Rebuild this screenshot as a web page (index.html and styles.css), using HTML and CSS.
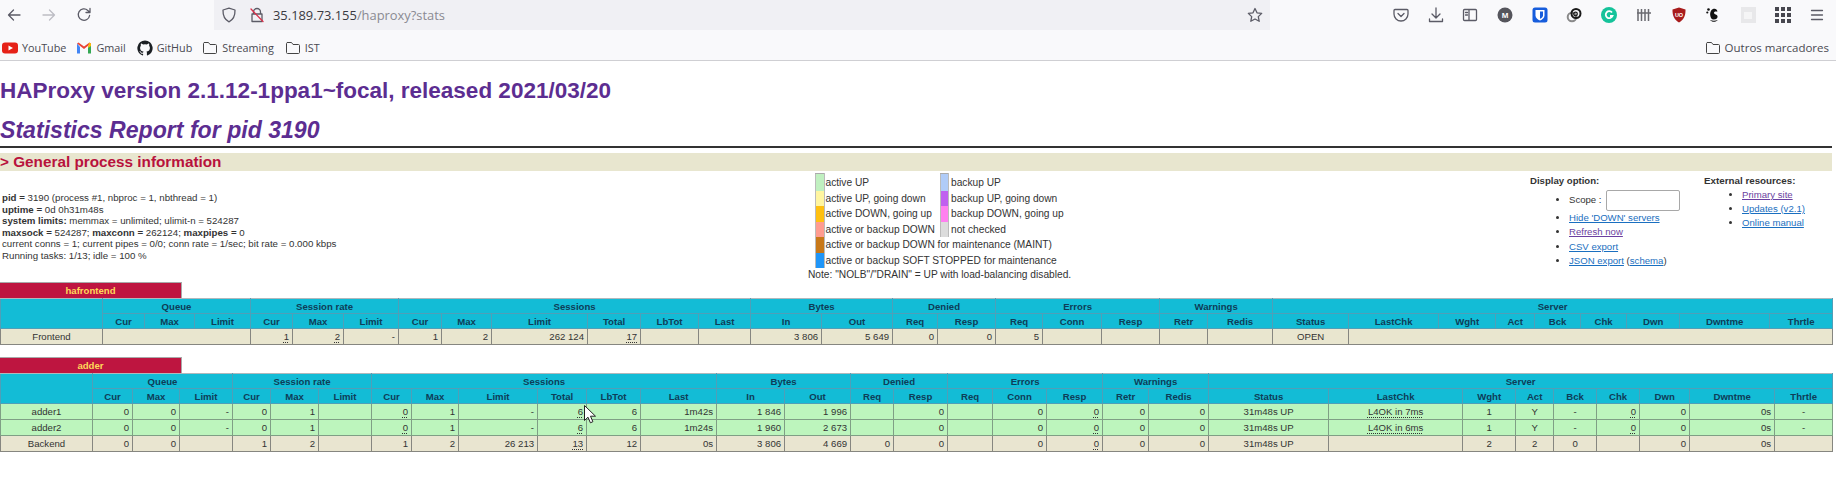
FILE: index.html
```html
<!DOCTYPE html>
<html lang="en">
<head>
<meta charset="utf-8">
<title>Statistics Report for HAProxy</title>
<link rel="stylesheet" href="styles.css">
</head>
<body>
<header class="chrome">
  <div class="nav">
    <div class="nav-left">
      <svg class="ico" viewBox="0 0 16 16"><path class="st" d="M14 8H2.5M7.5 3 2.5 8l5 5"/></svg>
      <svg class="ico" viewBox="0 0 16 16"><path class="st faint" d="M2 8h11.5M8.5 3l5 5-5 5"/></svg>
      <svg class="ico" viewBox="0 0 16 16"><path class="st" d="M13.6 8.5A5.7 5.7 0 1 1 11.8 3.4L14 5.4M14 1.5v4h-4"/></svg>
    </div>
    <div class="url">
      <svg class="ico" viewBox="0 0 16 16"><path class="st" d="M8 1.2 14 3c.2 6-1.6 9.6-6 11.8C3.600 12.600 1.800 9 2 3z"/></svg>
      <svg class="ico lock" viewBox="0 0 16 16"><path class="st" d="M4.500 7V5a3.500 3.500 0 0 1 7 0v2M3 7h10v7.500H3z"/><path class="st red" d="M2 2l12 12.500"/></svg>
      <span class="addr">35.189.73.155<span class="addr-dim">/haproxy?stats</span></span>
      <svg class="ico star" viewBox="0 0 16 16"><path class="st" d="m8 1.500 2 4.300 4.700.6-3.400 3.200.9 4.700L8 12l-4.200 2.300.9-4.700L1.300 6.400 6 5.800z"/></svg>
    </div>
    <div class="nav-right">
      <svg class="ico" viewBox="0 0 16 16"><path class="st" d="M2 2.500h12c.6 0 1 .4 1 1V7a7 7 0 0 1-14 0V3.500c0-.6.4-1 1-1z"/><path class="st" d="m5 6.500 3 3 3-3"/></svg>
      <svg class="ico" viewBox="0 0 16 16"><path class="st" d="M8 1v9.500M4 7l4 4 4-4M1.500 12v2.500h13V12"/></svg>
      <svg class="ico" viewBox="0 0 16 16"><path class="st" d="M2.500 2.500h11c.6 0 1 .4 1 1v9c0 .6-.4 1-1 1h-11c-.6 0-1-.4-1-1v-9c0-.6.4-1 1-1zM7 2.500v11M3.500 5.500h2M3.500 8h2"/></svg>
      <svg class="ico" viewBox="0 0 16 16"><circle cx="8" cy="8" r="7.500" fill="#55555c"/><text x="8" y="11" class="ic-t">M</text></svg>
      <svg class="ico" viewBox="0 0 16 16"><rect x="0.500" y="0.500" width="15" height="15" rx="2.500" fill="#175ddc"/><path d="M3.500 3h9v5.500c0 2.500-2.200 4-4.500 5-2.300-1-4.500-2.500-4.500-5z" fill="#fff"/><path d="M8 4.500h3v4c0 1.500-1.500 2.600-3 3.300z" fill="#175ddc"/></svg>
      <svg class="ico" viewBox="0 0 16 16"><circle cx="6" cy="10" r="4.300" fill="none" stroke="#8a8a8a" stroke-width="2"/><circle cx="10" cy="6.500" r="4.500" fill="none" stroke="#1a1a1a" stroke-width="2"/><circle cx="9.500" cy="7" r="1.800" fill="none" stroke="#1a1a1a" stroke-width="1.300"/></svg>
      <svg class="ico" viewBox="0 0 16 16"><circle cx="8" cy="8" r="8" fill="#15c39a"/><path d="M11 5.500A3.500 3.500 0 1 0 11.500 9H9" fill="none" stroke="#fff" stroke-width="1.800"/></svg>
      <svg class="ico" viewBox="0 0 16 16"><path class="st bars" d="M2 2v12M5.500 2v12M9 2v12M12.500 2v12M1 6h14"/></svg>
      <svg class="ico" viewBox="0 0 16 16"><path d="M8 .5 14.500 2.500C14.700 9 12.500 13 8 15.500 3.500 13 1.300 9 1.500 2.500z" fill="#a81c1c"/><text x="8" y="10" class="ic-t ic-sm">UO</text></svg>
      <svg class="ico" viewBox="0 0 16 16"><path d="M8.500 12.500c3 0 4.500-1.700 4-3.500-.5-1.700-3.200-1.300-3.500-3-.3-1.400 1.700-2 3.200-1.200.8-1.500-1.700-3.500-3.700-3C5.800 2.500 4.800 6 5.300 8.700c.4 2.300 1.400 3.800 3.200 3.800z" fill="#111"/><circle cx="3.500" cy="2.500" r="1.300" fill="#111"/><circle cx="2.300" cy="5.500" r="1.100" fill="#111"/><path d="M5 13c1.800 2.400 6 2.400 7.800 0-2.400.9-5.400.9-7.800 0z" fill="#111"/></svg>
      <svg class="ico" viewBox="0 0 16 16"><rect x="1" y="0" width="15" height="16" fill="#e8e8ea"/><rect x="4" y="5" width="8" height="7" fill="#f5f5f6"/></svg>
      <svg class="ico" viewBox="0 0 16 16"><path d="M0 0h4v4H0zM6 0h4v4H6zM12 0h4v4h-4zM0 6h4v4H0zM6 6h4v4H6zM12 6h4v4h-4zM0 12h4v4H0zM6 12h4v4H6zM12 12h4v4h-4z" fill="#47474f"/></svg>
      <svg class="ico" viewBox="0 0 16 16"><path class="st" d="M2.500 3.500h11M2.500 8h11M2.500 12.500h11"/></svg>
    </div>
  </div>
  <div class="bookmarks">
    <span class="bm bm-yt"><svg class="bi" viewBox="0 0 16 16"><rect y="2.500" width="16" height="11" rx="3" fill="#e62117"/><path d="m6.500 5.500 4.500 2.500-4.500 2.500z" fill="#fff"/></svg>YouTube</span>
    <span class="bm bm-gm"><svg class="bi" viewBox="0 0 16 16"><path d="M1 3.500v10h3V7z" fill="#4285f4"/><path d="M15 3.500v10h-3V7z" fill="#34a853"/><path d="M1 3.500 8 9l7-5.500-1.500-1L8 6.500 2.500 2.500z" fill="#ea4335"/><path d="M13 2.800 15 3.500V6l-3 2z" fill="#fbbc04"/></svg>Gmail</span>
    <span class="bm bm-gh"><svg class="bi" viewBox="0 0 16 16"><path d="M8 .5a7.700 7.700 0 0 0-2.400 15c.4 0 .5-.2.5-.4v-1.400c-2.100.5-2.600-1-2.600-1-.3-.9-.8-1.100-.8-1.100-.7-.5 0-.5 0-.5.800 0 1.200.8 1.200.8.700 1.200 1.800.9 2.200.7 0-.5.300-.9.500-1.100-1.700-.2-3.500-.8-3.500-3.800 0-.8.300-1.500.8-2-.1-.2-.3-1 .1-2.100 0 0 .6-.2 2.100.8a7.400 7.400 0 0 1 3.800 0c1.500-1 2.100-.8 2.100-.8.400 1.100.2 1.900.1 2.100.5.500.8 1.200.8 2 0 3-1.800 3.600-3.500 3.800.3.200.5.700.5 1.500v2.100c0 .2.100.4.500.4A7.700 7.700 0 0 0 8 .5z" fill="#1b1f23"/></svg>GitHub</span>
    <span class="bm bm-st"><svg class="bi" viewBox="0 0 16 16"><path class="st thin" d="M2.500 2.500h4l1.500 2h5.500c.6 0 1 .4 1 1v7c0 .6-.4 1-1 1h-11c-.6 0-1-.4-1-1v-9c0-.6.4-1 1-1z"/></svg>Streaming</span>
    <span class="bm bm-is"><svg class="bi" viewBox="0 0 16 16"><path class="st thin" d="M2.500 2.500h4l1.500 2h5.500c.6 0 1 .4 1 1v7c0 .6-.4 1-1 1h-11c-.6 0-1-.4-1-1v-9c0-.6.4-1 1-1z"/></svg>IST</span>
    <span class="bm bm-ot"><svg class="bi" viewBox="0 0 16 16"><path class="st thin" d="M2.500 2.500h4l1.500 2h5.500c.6 0 1 .4 1 1v7c0 .6-.4 1-1 1h-11c-.6 0-1-.4-1-1v-9c0-.6.4-1 1-1z"/></svg>Outros marcadores</span>
  </div>
</header>

<main class="page">
  <h1>HAProxy version 2.1.12-1ppa1~focal, released 2021/03/20</h1>
  <h2>Statistics Report for pid 3190</h2>
  <hr class="rule">
  <h3>&gt; General process information</h3>
  <section class="info">
    <div class="proc">
      <p><b>pid = </b>3190 (process #1, nbproc = 1, nbthread = 1)</p>
      <p><b>uptime = </b>0d 0h31m48s</p>
      <p><b>system limits:</b> memmax = unlimited; ulimit-n = 524287</p>
      <p><b>maxsock = </b>524287; <b>maxconn = </b>262124; <b>maxpipes = </b>0</p>
      <p>current conns = 1; current pipes = 0/0; conn rate = 1/sec; bit rate = 0.000 kbps</p>
      <p>Running tasks: 1/13; idle = 100 %</p>
    </div>
    <div class="legend">
      <table class="lg">
        <tr class="lg-first"><td class="sw c-up"></td><td class="lt">active UP</td><td class="sw c-bup"></td><td class="rt">backup UP</td></tr>
        <tr><td class="sw c-upd"></td><td class="lt">active UP, going down</td><td class="sw c-bupd"></td><td class="rt">backup UP, going down</td></tr>
        <tr><td class="sw c-dnu"></td><td class="lt">active DOWN, going up</td><td class="sw c-bdnu"></td><td class="rt">backup DOWN, going up</td></tr>
        <tr><td class="sw c-dn"></td><td class="lt">active or backup DOWN</td><td class="sw c-nc"></td><td class="rt">not checked</td></tr>
        <tr><td class="sw c-mnt"></td><td class="lt" colspan="3">active or backup DOWN for maintenance (MAINT)</td></tr>
        <tr><td class="sw c-soft"></td><td class="lt" colspan="3">active or backup SOFT STOPPED for maintenance</td></tr>
      </table>
      <p class="note">Note: "NOLB"/"DRAIN" = UP with load-balancing disabled.</p>
    </div>
    <div class="opts">
      <b class="opt-h">Display option:</b>
      <ul>
        <li class="scope">Scope : <input class="scope-in" type="text"></li>
        <li><a href="#">Hide 'DOWN' servers</a></li>
        <li><a class="vis" href="#">Refresh now</a></li>
        <li><a href="#">CSV export</a></li>
        <li><a href="#">JSON export</a> (<a href="#">schema</a>)</li>
      </ul>
    </div>
    <div class="ext">
      <b class="opt-h">External resources:</b>
      <ul>
        <li><a class="vis" href="#">Primary site</a></li>
        <li><a href="#">Updates (v2.1)</a></li>
        <li><a href="#">Online manual</a></li>
      </ul>
    </div>
  </section>

  <div class="tab">hafrontend</div>
  <table class="tbl t1">
    <colgroup><col><col><col><col><col><col><col><col><col><col><col><col><col><col><col><col><col><col><col><col><col><col><col><col><col><col><col><col><col><col><col></colgroup>
    <tr class="h"><th rowspan="2"></th><th colspan="3">Queue</th><th colspan="3">Session rate</th><th colspan="6">Sessions</th><th colspan="2">Bytes</th><th colspan="2">Denied</th><th colspan="3">Errors</th><th colspan="2">Warnings</th><th colspan="9">Server</th></tr>
    <tr class="h"><th>Cur</th><th>Max</th><th>Limit</th><th>Cur</th><th>Max</th><th>Limit</th><th>Cur</th><th>Max</th><th>Limit</th><th>Total</th><th>LbTot</th><th>Last</th><th>In</th><th>Out</th><th>Req</th><th>Resp</th><th>Req</th><th>Conn</th><th>Resp</th><th>Retr</th><th>Redis</th><th>Status</th><th>LastChk</th><th>Wght</th><th>Act</th><th>Bck</th><th>Chk</th><th>Dwn</th><th>Dwntme</th><th>Thrtle</th></tr>
    <tr class="fe"><td class="c">Frontend</td><td colspan="3"></td><td><u>1</u></td><td><u>2</u></td><td>-</td><td>1</td><td>2</td><td>262 124</td><td><u>17</u></td><td></td><td></td><td>3 806</td><td>5 649</td><td>0</td><td>0</td><td>5</td><td></td><td></td><td></td><td></td><td class="c">OPEN</td><td colspan="8"></td></tr>
  </table>

  <div class="tab tab2">adder</div>
  <div class="tw">
    <table class="tbl t2">
      <colgroup><col><col><col><col><col><col><col><col><col><col><col><col><col><col><col><col><col><col><col><col><col><col><col><col><col><col><col><col><col><col><col></colgroup>
      <tr class="h"><th rowspan="2"></th><th colspan="3">Queue</th><th colspan="3">Session rate</th><th colspan="6">Sessions</th><th colspan="2">Bytes</th><th colspan="2">Denied</th><th colspan="3">Errors</th><th colspan="2">Warnings</th><th colspan="9">Server</th></tr>
      <tr class="h"><th>Cur</th><th>Max</th><th>Limit</th><th>Cur</th><th>Max</th><th>Limit</th><th>Cur</th><th>Max</th><th>Limit</th><th>Total</th><th>LbTot</th><th>Last</th><th>In</th><th>Out</th><th>Req</th><th>Resp</th><th>Req</th><th>Conn</th><th>Resp</th><th>Retr</th><th>Redis</th><th>Status</th><th>LastChk</th><th>Wght</th><th>Act</th><th>Bck</th><th>Chk</th><th>Dwn</th><th>Dwntme</th><th>Thrtle</th></tr>
      <tr class="up"><td class="c">adder1</td><td>0</td><td>0</td><td>-</td><td>0</td><td>1</td><td></td><td><u>0</u></td><td>1</td><td>-</td><td><u>6</u></td><td>6</td><td>1m42s</td><td>1 846</td><td>1 996</td><td></td><td>0</td><td></td><td>0</td><td><u>0</u></td><td>0</td><td>0</td><td class="c">31m48s UP</td><td class="c"><u>L4OK in 7ms</u></td><td class="c">1</td><td class="c">Y</td><td class="c">-</td><td><u>0</u></td><td>0</td><td>0s</td><td class="c">-</td></tr>
      <tr class="up"><td class="c">adder2</td><td>0</td><td>0</td><td>-</td><td>0</td><td>1</td><td></td><td><u>0</u></td><td>1</td><td>-</td><td><u>6</u></td><td>6</td><td>1m24s</td><td>1 960</td><td>2 673</td><td></td><td>0</td><td></td><td>0</td><td><u>0</u></td><td>0</td><td>0</td><td class="c">31m48s UP</td><td class="c"><u>L4OK in 6ms</u></td><td class="c">1</td><td class="c">Y</td><td class="c">-</td><td><u>0</u></td><td>0</td><td>0s</td><td class="c">-</td></tr>
      <tr class="be"><td class="c">Backend</td><td>0</td><td>0</td><td></td><td>1</td><td>2</td><td></td><td>1</td><td>2</td><td>26 213</td><td><u>13</u></td><td>12</td><td>0s</td><td>3 806</td><td>4 669</td><td>0</td><td>0</td><td></td><td>0</td><td><u>0</u></td><td>0</td><td>0</td><td class="c">31m48s UP</td><td></td><td class="c">2</td><td class="c">2</td><td class="c">0</td><td></td><td>0</td><td>0s</td><td></td></tr>
    </table>
    <svg class="cursor" viewBox="0 0 12 19"><path d="M.5.500v15l3.500-3.300 2.400 5.600 2.500-1.100-2.400-5.500h5z" fill="#fff" stroke="#222" stroke-width="1"/></svg>
  </div>
</main>
</body>
</html>
```
FILE: styles.css
```css
* { box-sizing: border-box; }
html, body { margin: 0; padding: 0; background: #fff; }
body { width: 1836px; height: 482px; overflow: hidden; font-family: "Liberation Sans", Arial, sans-serif; font-size: 9.6px; color: #333; }

/* browser chrome */
.chrome { height: 61px; background: #f9f9fb; border-bottom: 1px solid #cfcfd3; font-family: "Open Sans", "Noto Sans", sans-serif; color: #4a4a52; }
.nav { height: 36px; display: flex; align-items: flex-start; }
.nav-left { width: 214px; height: 30px; padding-left: 6px; display: flex; align-items: center; gap: 19px; }
.ico { width: 16px; height: 16px; flex: none; }
.st { fill: none; stroke: #5b5b66; stroke-width: 1.300; stroke-linejoin: round; stroke-linecap: round; }
.st.faint { stroke: #bdbdc4; }
.st.red { stroke: #d9304a; }
.st.bars { stroke: #6a6a70; stroke-width: 1.500; stroke-linecap: butt; }
.st.thin { stroke-width: 1; stroke: #444; }
.url { width: 1056px; height: 30px; background: #f0f0f4; display: flex; align-items: center; padding-left: 7px; }
.lock { margin-left: 12px; }
.addr { margin-left: 8px; font-size: 12.900px; color: #3a3a42; }
.addr-dim { color: #8a8a92; }
.star { margin-left: auto; margin-right: 7px; }
.nav-right { height: 30px; display: flex; align-items: center; gap: 18.700px; margin-left: 123px; }
.ic-t { font: bold 8px "Liberation Sans", sans-serif; fill: #fff; text-anchor: middle; }
.ic-sm { font-size: 5.500px; }

.bookmarks { height: 24px; display: flex; align-items: center; font-size: 10.800px; padding-left: 2px; margin-top: -0.500px; }
.bm { display: inline-flex; align-items: center; gap: 4px; white-space: nowrap; }
.bi { width: 16px; height: 16px; flex: none; }
.bm-gm { margin-left: 10px; }
.bm-gh { margin-left: 11px; }
.bm-st { margin-left: 10px; }
.bm-is { margin-left: 11px; }
.bm-ot { margin-left: auto; margin-right: 7px; font-size: 11.500px; }

/* stats page */
.page { width: 1832px; color: #333; }
h1, h2, h3 { margin: 0; }
h1 { margin-top: 16px; font-size: 22.500px; line-height: 28px; color: #5c2d91; white-space: nowrap; }
h2 { margin-top: 11px; font-size: 23.100px; line-height: 28px; font-style: italic; color: #5c2d91; }
.rule { height: 2px; border: 0; margin: 2px 0 5px; background: #333; }
h3 { height: 18px; font-size: 15.300px; line-height: 18px; color: #b8123c; background: #e8e6cf; }

.info { display: flex; height: 111px; }
.proc { width: 808px; padding: 21px 0 0 2px; line-height: 11.600px; font-size: 9.700px; }
.proc p { margin: 0; }
.legend { width: 722px; padding-top: 2px; font-size: 10.200px; }
.lg { border-collapse: collapse; margin-left: 7px; }
.lg td { padding: 0; height: 15.500px; white-space: nowrap; }
.lg-first td { height: 17px; }
.lg td.lt { padding-left: 1px; width: 116px; }
.lg td.rt { padding-left: 2px; }
.lg td.sw { width: 8.500px; min-width: 8.500px; padding: 0; border-left: 1px solid #bbb; border-right: 1px solid #bbb; }
.lg-first td.sw { border-top: 1px solid #aaa; }
.c-up { background: #c0f0c0; }
.c-upd { background: #fff5a0; }
.c-dnu { background: #ffc010; }
.c-dn { background: #ff9c90; }
.c-mnt { background: #c87818; }
.c-soft { background: #2096f8; }
.c-bup { background: #b0ccf8; }
.c-bupd { background: #c060f0; }
.c-bdnu { background: #ff80f0; }
.c-nc { background: #dcdcdc; }
.note { margin: 1px 0 0; line-height: 12px; }

.opts { width: 174px; padding-top: 4px; }
.ext { padding-top: 4px; }
.opt-h { display: block; line-height: 12px; white-space: nowrap; }
.ext .opt-h { font-size: 9.800px; }
.info ul { margin: 2px 0 0; padding: 0; list-style: disc; }
.opts ul { margin-left: 39px; }
.ext ul { margin-left: 38px; margin-top: 1px; }
.info li { line-height: 14.500px; height: 14.500px; white-space: nowrap; }
.ext li { height: 14px; line-height: 14px; }
.info li.scope { height: 21.500px; line-height: 21.500px; }
.scope-in { width: 74px; height: 21px; margin-left: 2px; border: 1px solid #a8a8a8; border-radius: 2px; background: #fff; padding: 0; vertical-align: middle; }
a { color: #1a6fc0; text-decoration: underline; }
a.vis { color: #6b3fa0; }

.tab { width: 182px; height: 16px; background: #be1540; color: #ffd95a; font-weight: bold; text-align: center; line-height: 15px; border-top: 1px solid #a9a9a9; border-right: 1px solid #a9a9a9; }
.tab2 { margin-top: 12px; }
.tw { position: relative; width: 1832px; }
.tbl { width: 1832px; table-layout: fixed; border-collapse: collapse; }
.tbl th, .tbl td { padding: 0 3px; white-space: nowrap; overflow: hidden; }
.tbl th { height: 15px; background: #13bcd6; color: #0e3d58; text-align: center; font-weight: bold; border: 1px solid #4f9fb8; }
.tbl tr:first-child th { border-top-color: #b0b8bc; }
.tbl td { height: 16px; text-align: right; border: 1px solid #868680; }
.tbl td.c { text-align: center; }
.tbl u { text-decoration: underline dotted; text-underline-offset: 2px; }
.fe td { background: #e9e6cf; }
.up td { background: #bdf5bd; border-color: #7f9f85; }
.be td { background: #e9e5d0; }

.t1 col:nth-child(1) { width: 102px; } .t1 col:nth-child(2) { width: 42px; } .t1 col:nth-child(3) { width: 50px; } .t1 col:nth-child(4) { width: 56px; }
.t1 col:nth-child(5) { width: 42px; } .t1 col:nth-child(6) { width: 51px; } .t1 col:nth-child(7) { width: 55px; } .t1 col:nth-child(8) { width: 43px; }
.t1 col:nth-child(9) { width: 50px; } .t1 col:nth-child(10) { width: 96px; } .t1 col:nth-child(11) { width: 53px; } .t1 col:nth-child(12) { width: 58px; }
.t1 col:nth-child(13) { width: 52px; } .t1 col:nth-child(14) { width: 71px; } .t1 col:nth-child(15) { width: 71px; } .t1 col:nth-child(16) { width: 45px; }
.t1 col:nth-child(17) { width: 58px; } .t1 col:nth-child(18) { width: 47px; } .t1 col:nth-child(19) { width: 59px; } .t1 col:nth-child(20) { width: 58px; }
.t1 col:nth-child(21) { width: 48px; } .t1 col:nth-child(22) { width: 65px; } .t1 col:nth-child(23) { width: 76px; } .t1 col:nth-child(24) { width: 90px; }
.t1 col:nth-child(25) { width: 57px; } .t1 col:nth-child(26) { width: 39px; } .t1 col:nth-child(27) { width: 46px; } .t1 col:nth-child(28) { width: 46px; }
.t1 col:nth-child(29) { width: 53px; } .t1 col:nth-child(30) { width: 90px; } .t1 col:nth-child(31) { width: 63px; }

.t2 col:nth-child(1) { width: 92px; } .t2 col:nth-child(2) { width: 40px; } .t2 col:nth-child(3) { width: 47px; } .t2 col:nth-child(4) { width: 53px; }
.t2 col:nth-child(5) { width: 38px; } .t2 col:nth-child(6) { width: 48px; } .t2 col:nth-child(7) { width: 53px; } .t2 col:nth-child(8) { width: 40px; }
.t2 col:nth-child(9) { width: 47px; } .t2 col:nth-child(10) { width: 79px; } .t2 col:nth-child(11) { width: 49px; } .t2 col:nth-child(12) { width: 54px; }
.t2 col:nth-child(13) { width: 76px; } .t2 col:nth-child(14) { width: 68px; } .t2 col:nth-child(15) { width: 66px; } .t2 col:nth-child(16) { width: 43px; }
.t2 col:nth-child(17) { width: 54px; } .t2 col:nth-child(18) { width: 45px; } .t2 col:nth-child(19) { width: 54px; } .t2 col:nth-child(20) { width: 56px; }
.t2 col:nth-child(21) { width: 46px; } .t2 col:nth-child(22) { width: 60px; } .t2 col:nth-child(23) { width: 120px; } .t2 col:nth-child(24) { width: 134px; }
.t2 col:nth-child(25) { width: 53px; } .t2 col:nth-child(26) { width: 38px; } .t2 col:nth-child(27) { width: 43px; } .t2 col:nth-child(28) { width: 43px; }
.t2 col:nth-child(29) { width: 50px; } .t2 col:nth-child(30) { width: 85px; } .t2 col:nth-child(31) { width: 58px; }

.cursor { position: absolute; left: 584px; top: 32px; width: 12px; height: 19px; }
```
